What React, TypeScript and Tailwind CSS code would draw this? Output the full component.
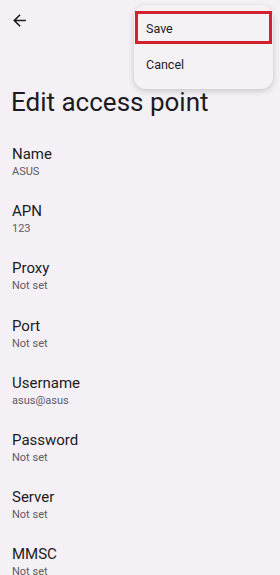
const items = [
  { label: "Name", value: "ASUS" },
  { label: "APN", value: "123" },
  { label: "Proxy", value: "Not set" },
  { label: "Port", value: "Not set" },
  { label: "Username", value: "asus@asus" },
  { label: "Password", value: "Not set" },
  { label: "Server", value: "Not set" },
  { label: "MMSC", value: "Not set" },
];

function BackArrow() {
  return (
    <svg width="19" height="19" viewBox="0 0 24 24" fill="#1c1b1f">
      <path d="M20 11H7.83l5.59-5.59L12 4l-8 8 8 8 1.41-1.41L7.83 13H20v-2z" />
    </svg>
  );
}

export default function App() {
  return (
    <div className="relative h-[575px] overflow-hidden bg-[#f4f0f5] font-['Roboto',sans-serif] text-[#1c1b1f]">
      <div className="flex h-10 items-center px-[10px]">
        <BackArrow />
      </div>

      <h1 className="mt-[46px] mb-[15px] pl-[11px] text-[26px] leading-[32px] font-normal">Edit access point</h1>

      <div className="flex flex-col">
        {items.map((item) => (
          <div key={item.label} className="flex flex-col px-3 pt-[11px] pb-[11.2px]">
            <span className="text-[15px] leading-[20px]">{item.label}</span>
            <span className="mt-px text-[11px] leading-[14px] text-[#5f5b63]">{item.value}</span>
          </div>
        ))}
      </div>

      <div className="absolute top-[5px] right-[7px] w-[139px] rounded-[12px] bg-[#f5f2f6] pt-[6px] pb-[8px] shadow-[0_2px_6px_rgba(0,0,0,0.18)]">
        <div className="mx-px flex h-[33px] items-center border-[3px] border-[#d3222f] pt-[4px] pl-[8px] text-[12.5px]">
          Save
        </div>
        <div className="mt-[3px] flex h-[34px] items-center pt-[2px] pl-[12px] text-[12.5px]">Cancel</div>
      </div>
    </div>
  );
}
